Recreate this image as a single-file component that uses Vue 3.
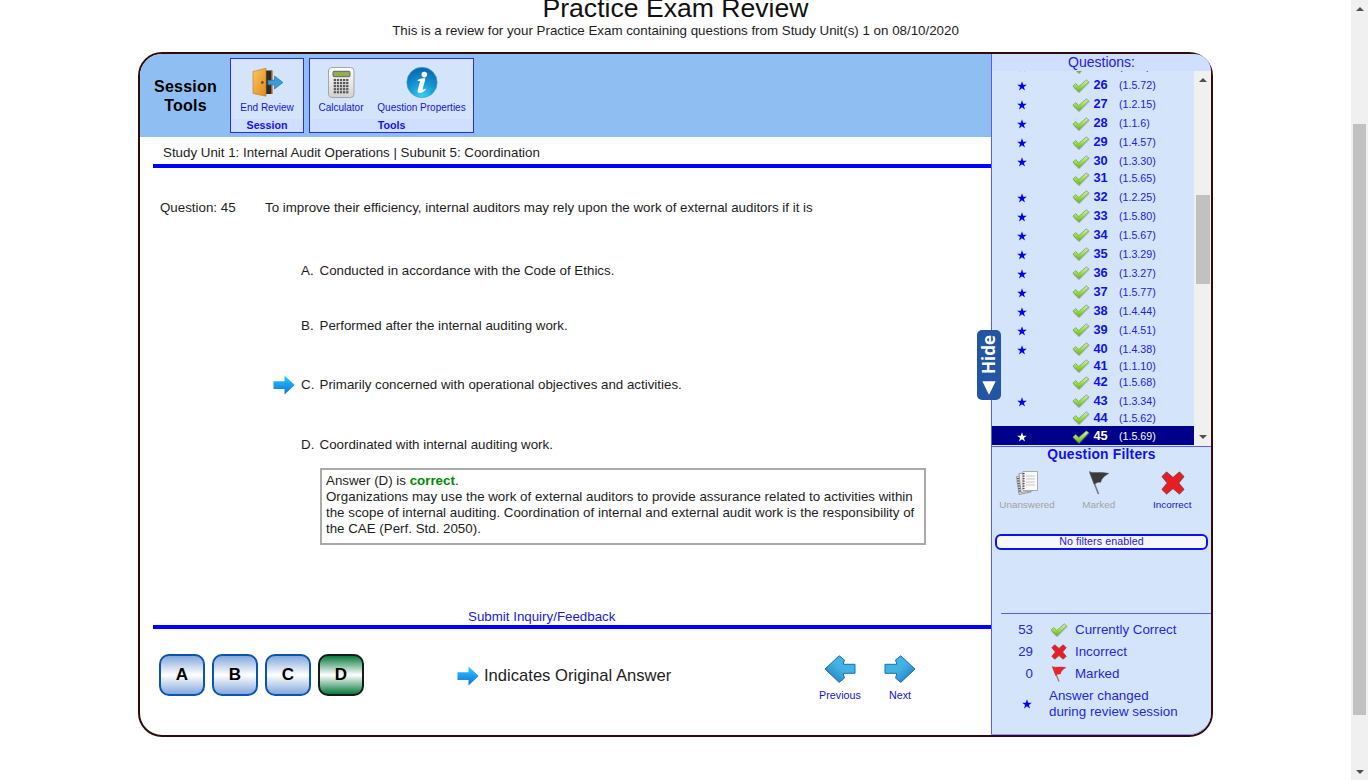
<script setup>
const subunits = {
  25: '1.1.7', 26: '1.5.72', 27: '1.2.15', 28: '1.1.6', 29: '1.4.57', 30: '1.3.30', 31: '1.5.65',
  32: '1.2.25', 33: '1.5.80', 34: '1.5.67', 35: '1.3.29', 36: '1.3.27', 37: '1.5.77', 38: '1.4.44',
  39: '1.4.51', 40: '1.4.38', 41: '1.1.10', 42: '1.5.68', 43: '1.3.34', 44: '1.5.62', 45: '1.5.69'
}
const unstarred = [31, 41, 42, 44]
const rows = Object.keys(subunits).map(Number).map(n => ({
  n, code: `(${subunits[n]})`, star: !unstarred.includes(n), active: n === 45
}))
const options = [
  ['A.', 'Conducted in accordance with the Code of Ethics.'],
  ['B.', 'Performed after the internal auditing work.'],
  ['C.', 'Primarily concerned with operational objectives and activities.'],
  ['D.', 'Coordinated with internal auditing work.']
]
</script>

<template>
  <div class="page">
    <svg class="defs" width="0" height="0" aria-hidden="true">
      <defs>
        <linearGradient id="gCheck" x1="0" y1="0" x2="0" y2="1"><stop offset="0" stop-color="#d4f2ae" /><stop offset=".5" stop-color="#9be24a" /><stop offset="1" stop-color="#62b814" /></linearGradient>
        <linearGradient id="gArrow" x1="0" y1="0" x2="0" y2="1"><stop offset="0" stop-color="#2fd0f8" /><stop offset=".5" stop-color="#1c9cf0" /><stop offset="1" stop-color="#1470d8" /></linearGradient>
        <linearGradient id="gNav" x1="0" y1="0" x2="1" y2="1"><stop offset="0" stop-color="#3fb8ea" /><stop offset=".5" stop-color="#43b0e2" /><stop offset="1" stop-color="#1470b4" /></linearGradient>
        <linearGradient id="gDoor" x1="0" y1="0" x2="1" y2="1"><stop offset="0" stop-color="#fbc662" /><stop offset="1" stop-color="#e08a1c" /></linearGradient>
        <linearGradient id="gCalc" x1="0" y1="0" x2="0" y2="1"><stop offset="0" stop-color="#ffffff" /><stop offset="1" stop-color="#d2d2d2" /></linearGradient>
        <radialGradient id="gInfo" cx=".5" cy=".95" r=".9"><stop offset="0" stop-color="#35d0f4" /><stop offset=".55" stop-color="#1590d0" /><stop offset="1" stop-color="#0a6ab0" /></radialGradient>
        <symbol id="check" viewBox="0 0 18 14">
          <path d="M2 8.4 7 13.6 17.3 3.2" fill="none" stroke="#777" stroke-opacity=".35" stroke-width="1.5" />
          <path d="M.9 7.2 3.7 4.6 6.8 7.5 14.3.9 16.7 2.7 7.1 12.8Z" fill="url(#gCheck)" stroke="#7a9a62" stroke-width=".8" stroke-linejoin="round" />
        </symbol>
        <symbol id="cross" viewBox="0 0 24 24">
          <path d="M5.6 1.2 12 6.6 18.4 1.2 22.8 5.6 17.4 12 22.8 18.4 18.4 22.8 12 17.4 5.6 22.8 1.2 18.4 6.6 12 1.2 5.6Z" fill="#e81c24" stroke="#a8383a" stroke-width="1.2" stroke-linejoin="round" />
        </symbol>
        <symbol id="arrow" viewBox="0 0 22 20">
          <path d="M.5 6.3H11.5V.5L21.7 10 11.5 19.5V14H.5Z" fill="url(#gArrow)" />
        </symbol>
        <symbol id="nav" viewBox="0 0 32 28">
          <path d="M1 9.3H12.5V8L11.5 5 16.8.8 31 14 16.8 27.4 11.5 23 12.5 20V18.3H1Z" fill="url(#gNav)" stroke="#1c6fa8" stroke-width="1" stroke-linejoin="round" />
        </symbol>
        <symbol id="star" viewBox="0 0 10 10">
          <path d="M5 .3 6.2 3.7 9.8 3.8 6.9 5.9 8 9.4 5 7.3 2 9.4 3.1 5.9.2 3.8 3.8 3.7Z" fill="currentColor" />
        </symbol>
      </defs>
    </svg>

    <main class="main">
      <h1>Practice Exam Review</h1>
      <p class="sub">This is a review for your Practice Exam containing questions from Study Unit(s) 1 on 08/10/2020</p>

      <div class="panel">
        <section class="left">
          <header class="toolbar">
            <div class="tb-title">Session<br>Tools</div>
            <div class="group g1">
              <div class="tools">
                <div class="tool exit">
                  <svg width="32" height="32" viewBox="0 0 32 32">
                    <path d="M12 3.5H20V27H12Z" fill="#2b2b2b" /><path d="M19 3.5H20.6V27H19" fill="#a86018" />
                    <path d="M1 4.5 14 1.2V29.2L1 26.5Z" fill="url(#gDoor)" stroke="#c07818" stroke-width=".6" />
                    <circle cx="10.3" cy="15.5" r="1.4" fill="#8a4a10" />
                    <path d="M16 13.3H22.5V9L31 15.5 22.5 22V17.8H16Z" fill="#3b9ad8" stroke="#2176b4" stroke-width=".7" />
                  </svg>
                  <span>End Review</span>
                </div>
              </div>
              <div class="g-label">Session</div>
            </div>
            <div class="group g2">
              <div class="tools">
                <div class="tool calc">
                  <svg width="32" height="34" viewBox="0 0 32 34">
                    <rect x="3.5" y="1.5" width="25.5" height="30" rx="3.5" fill="url(#gCalc)" stroke="#a5a5a5" />
                    <rect x="8" y="5.3" width="17" height="5.4" rx="1" fill="#8fae4d" stroke="#666" />
                    <g fill="#595959">
                      <template v-for="r in 5" :key="r">
                        <rect v-for="c in 5" :key="c" :x="5.6 + c * 3.1" :y="9.9 + r * 3.05" width="2.3" height="2.2" />
                      </template>
                    </g>
                  </svg>
                  <span>Calculator</span>
                </div>
                <div class="tool props">
                  <svg width="32" height="34" viewBox="0 0 32 34">
                    <circle cx="16" cy="16.5" r="15.2" fill="url(#gInfo)" stroke="#4ba3d4" stroke-width=".7" />
                    <circle cx="18.3" cy="8.6" r="2.8" fill="#fff" />
                    <path d="M11.5 14.2C14 12.4 17.5 12 19.5 12.5L16.6 23.2C16.8 24.4 18.2 23.4 19.6 22.6L19.9 23.6C17.5 26.2 14.6 27.4 12.6 26.8 11.3 26.4 11.5 25 11.8 23.8L14 15.8C14 14.8 12.9 14.9 11.8 15.2Z" fill="#fff" />
                  </svg>
                  <span>Question Properties</span>
                </div>
              </div>
              <div class="g-label">Tools</div>
            </div>
          </header>

          <div class="unit">Study Unit 1: Internal Audit Operations | Subunit 5: Coordination</div>

          <div class="question">
            <span class="q-no">Question: 45</span>
            <span>To improve their efficiency, internal auditors may rely upon the work of external auditors if it is</span>
          </div>

          <div class="options">
            <div v-for="(o, i) in options" :key="o[0]" class="option" :class="'o' + i">
              <span class="mark"><svg v-if="i === 2" width="22" height="20"><use href="#arrow" /></svg></span>
              <span class="letter">{{ o[0] }}</span><span>{{ o[1] }}</span>
            </div>
          </div>

          <div class="explain">
            Answer (D) is <b>correct</b>.<br>
            Organizations may use the work of external auditors to provide assurance related to activities within<br>
            the scope of internal auditing. Coordination of internal and external audit work is the responsibility of<br>
            the CAE (Perf. Std. 2050).
          </div>

          <div class="feedback"><span>Submit Inquiry/Feedback</span></div>

          <footer class="bottom">
            <div v-for="l in ['A', 'B', 'C', 'D']" :key="l" class="choice" :class="{ green: l === 'D' }">{{ l }}</div>
            <div class="original"><svg width="22" height="20"><use href="#arrow" /></svg>Indicates Original Answer</div>
            <div class="nav prev"><svg width="32" height="28"><use href="#nav" /></svg>Previous</div>
            <div class="nav next"><svg width="32" height="28"><use href="#nav" /></svg>Next</div>
          </footer>
        </section>

        <aside class="side">
          <div class="s-head">Questions:</div>
          <div class="list">
            <div class="rows">
              <div v-for="r in rows" :key="r.n" class="row" :class="{ plain: !r.star, active: r.active }">
                <span class="st"><svg v-if="r.star" width="10" height="10"><use href="#star" /></svg></span>
                <svg class="ck" width="18" height="14"><use href="#check" /></svg>
                <b>{{ r.n }}</b><span class="code">{{ r.code }}</span>
              </div>
            </div>
            <div class="bar small"><i class="up"></i><i class="thumb"></i><i class="down"></i></div>
          </div>

          <div class="filters">
            <div class="f-title">Question Filters</div>
            <div class="f-items">
              <div class="f off">
                <svg width="24" height="26" viewBox="0 0 24 26">
                  <path d="M1.5 6.5 14 4.5 16 22 4 24.5Z" fill="#e4e4e4" stroke="#888" stroke-width=".8" />
                  <path d="M4 3.5 17 2.5 18.5 20.5 6 22.5Z" fill="#eee" stroke="#888" stroke-width=".8" />
                  <path d="M8 1.5H22.5V20.5H8Z" fill="#fafafa" stroke="#999" stroke-width=".8" />
                  <path d="M11 6H20M11 9H20M11 12H20M11 15H20" stroke="#c8c8c8" stroke-width="1" />
                  <path d="M8.6 3V19M2.9 8 5 23" stroke="#555" stroke-width="2" stroke-dasharray="1.2 1.3" />
                </svg>Unanswered
              </div>
              <div class="f off">
                <svg width="24" height="26" viewBox="0 0 24 26">
                  <path d="M3 2.5 11.5 24" stroke="#777" stroke-width="1.6" />
                  <path d="M2.5 1.5C6 4 12 1.2 21.8 3.4 17 6.3 14.5 8.5 13.8 12.2 11 12 9.5 12.6 7.2 14.2Z" fill="#3a3a3a" stroke="#555" stroke-width=".5" />
                </svg>Marked
              </div>
              <div class="f on"><svg width="24" height="26"><use href="#cross" /></svg>Incorrect</div>
            </div>
            <div class="pill">No filters enabled</div>
          </div>

          <div class="legend">
            <div class="lg"><span>53</span><svg width="18" height="14"><use href="#check" /></svg>Currently Correct</div>
            <div class="lg"><span>29</span><svg width="18" height="16"><use href="#cross" /></svg>Incorrect</div>
            <div class="lg"><span>0</span>
              <svg width="18" height="18" viewBox="0 0 18 18"><path d="M3 2 9 16.5" stroke="#a08050" stroke-width="1.4" /><path d="M2.3 1.5C5 3.2 9 1.2 15.8 2.6 12.5 4.6 11 6.3 10.4 9 8.5 8.8 7.3 9.2 5.6 10.4Z" fill="#e8242c" stroke="#b83030" stroke-width=".5" /></svg>Marked
            </div>
            <div class="lg last"><svg width="10" height="10"><use href="#star" /></svg><p>Answer changed<br>during review session</p></div>
          </div>

          <div class="hide"><span>Hide</span><svg width="14" height="14" viewBox="0 0 14 14"><path d="M.3.3 13.7 7 .3 13.7Z" fill="#fff" /></svg></div>
        </aside>
      </div>
    </main>
    <div class="bar large"><i class="up"></i><i class="thumb"></i><i class="down"></i></div>
  </div>
</template>

<style>
body { overflow: hidden; }
</style>
<style scoped>
* { box-sizing: border-box; }
.page { display: flex; width: 1368px; height: 780px; overflow: hidden; background: #fff; color: #1d1d1d; font: 13.33px/16px "Liberation Sans", Arial, sans-serif; letter-spacing: 0; }
.defs { position: absolute; }
.main { flex: 1; height: 780px; overflow: hidden; }
h1 { margin: -7px 0 0; font-size: 26.6px; line-height: 30px; font-weight: 400; text-align: center; color: #111; }
.sub { margin: 0; text-align: center; }
.panel { display: flex; width: 1075px; height: 685px; margin: 13px 0 0 138px; border: 2px solid #300c0c; border-radius: 24px; background: #fff; }
.left { width: 851px; }
.toolbar { display: flex; height: 83px; padding: 4px 0 0 14px; border-top-left-radius: 22px; background: #8fbff2; }
.tb-title { width: 63px; margin: 19px 13px 0 0; font-size: 16px; line-height: 19px; font-weight: 700; letter-spacing: .25px; text-align: center; color: #000; white-space: nowrap; }
.group { display: flex; flex-direction: column; height: 75px; border: 1px solid #2a2aff; background: #d4e5fb; color: #1414e6; font-size: 10px; line-height: 12px; }
.g1 { width: 74px; margin-right: 5px; }
.g2 { width: 165px; }
.tools { display: flex; height: 61px; }
.tool { display: flex; flex-direction: column; align-items: center; width: 72px; padding-top: 7px; }
.tool svg { height: 34px; margin-bottom: 2px; }
.tool.exit svg { margin-left: 2px; }
.tool.calc { width: 62px; }
.tool.props { width: 99px; }
.g-label { flex: 1; background: #d0deff; font-size: 10.67px; font-weight: 700; text-align: center; line-height: 13px; }
.unit { height: 31px; margin-left: 13px; padding: 8px 0 0 10px; border-bottom: 4px solid #00f; }
.question { display: flex; margin: 32px 0 0 20px; white-space: nowrap; }
.q-no { width: 105px; }
.options { margin: 47px 0 0 133px; }
.option { display: flex; height: 16px; white-space: nowrap; }
.mark { width: 22px; margin-right: 6px; }
.mark svg { display: block; margin-top: -2px; }
.letter { width: 18.5px; }
.o1 { margin-top: 39px; }
.o2 { margin-top: 43px; }
.o3 { margin-top: 44px; }
.explain { width: 606px; height: 77px; margin: 15px 0 0 180px; padding: 3px 0 0 4px; border: 2px solid #aaa; white-space: nowrap; }
.explain b { color: #008a00; }
.feedback { height: 20px; margin: 64px 0 0 13px; border-bottom: 4px solid #00f; color: #1a1ad8; }
.feedback span { display: block; margin-left: 315px; }
.bottom { display: flex; align-items: flex-start; padding: 25px 0 0 19px; }
.choice { width: 46px; height: 42px; margin-right: 7px; border: 2px solid #0a56ae; border-radius: 10px; background: linear-gradient(#84a8dc, #fff 50%, #84a8dc); color: #000; font-size: 17px; line-height: 37px; font-weight: 700; text-align: center; }
.choice.green { border-color: #141c18; background: linear-gradient(#077a3c, #fff 50%, #077a3c); }
.original { display: flex; gap: 5px; width: 360px; margin: 12px -7px 0 86px; font-size: 16.6px; line-height: 20px; white-space: nowrap; }
.nav { display: flex; flex-direction: column; align-items: center; gap: 5px; width: 60px; margin-top: 1px; color: #1010e8; font-size: 10.67px; line-height: 14px; letter-spacing: .05px; }
.prev svg { transform: scaleX(-1); }
.side { position: relative; width: 220px; height: 681px; border-left: 1px solid #5a5aff; border-bottom: 1px solid #9090ff; border-radius: 0 22px 22px 0; background: #d4e5fb; color: #2020e8; }
.s-head { height: 17px; background: #d0deff; border-top-right-radius: 22px; text-align: center; line-height: 17px; font-size: 14px; }
.list { display: flex; height: 375px; overflow: hidden; }
.rows { width: 202px; margin-top: -15px; }
.row { display: flex; align-items: flex-start; height: 19px; padding: 2px 0 0; }
.row.plain { height: 16.6px; padding-top: 0; }
.row.active { background: #00008b; color: #fff; }
.st { width: 80px; padding: 4px 0 0 25px; color: #00f; line-height: 0; }
.active .st { color: #fff; }
.ck { margin: 1.7px 3.5px 0 0; }
.row b { width: 25.5px; font-size: 12.8px; line-height: 16px; color: #1010f0; }
.row.active b { color: #fff; }
.code { font-size: 10.67px; line-height: 17.4px; }
.bar { display: flex; flex-direction: column; align-items: center; width: 17px; background: #f0f0f0; }
.bar i { display: block; }
.up { border: 4px solid transparent; border-top: 0; border-bottom-color: #505050; }
.down { margin-top: auto; border: 4px solid transparent; border-bottom: 0; border-top-color: #505050; }
.thumb { width: 13px; background: #c1c1c1; }
.small { height: 375px; padding: 7px 0 7px; }
.small .thumb { width: 14px; height: 89px; margin-top: 113px; }
.large { height: 780px; padding: 7px 0 6px; }
.large .thumb { height: 591px; margin-top: 113px; }
.filters { height: 167px; border-top: 1px solid #5a5aff; }
.f-title { font-size: 13.8px; line-height: 15px; font-weight: 700; letter-spacing: .22px; text-align: center; color: #1010f0; }
.f-items { display: flex; padding-top: 8px; }
.f { display: flex; flex-direction: column; align-items: center; width: 73.5px; gap: 3px; font-size: 9.9px; line-height: 12px; }
.f:first-child { width: 70px; }
.f.off { color: #a2a29e; }
.f.on { color: #1010e8; }
.f.on svg { margin-left: 2px; }
.pill { width: 213px; height: 16px; margin: 23px 0 0 3px; border: 2px solid #1010ee; border-radius: 6px; background: #f6f6ff; text-align: center; font-size: 10.67px; line-height: 11px; letter-spacing: .1px; }
.legend { margin-left: 9px; padding-top: 5px; border-top: 1px solid #5a5aff; color: #2626e8; }
.lg { display: flex; align-items: center; height: 22px; }
.lg span { width: 32px; text-align: right; }
.lg > svg { margin: 0 7px 0 17px; }
.lg:not(.last) > svg { margin-top: -1px; }
.lg.last { height: 32px; margin-top: 3px; }
.lg.last > svg { margin: 0 17px 0 21px; color: #00f; }
.lg p { margin: 0; line-height: 16px; letter-spacing: .02px; }
.hide { position: absolute; left: -15px; top: 276px; width: 24px; height: 70px; display: flex; flex-direction: column; align-items: center; justify-content: space-between; padding: 5px 0; border-radius: 5px; background: #2255a4; color: #fff; }
.hide span { writing-mode: vertical-rl; transform: rotate(180deg); font: 700 17px/20px "Open Sans", "DejaVu Sans", sans-serif; }
.hide svg { transform: rotate(90deg); }
</style>
